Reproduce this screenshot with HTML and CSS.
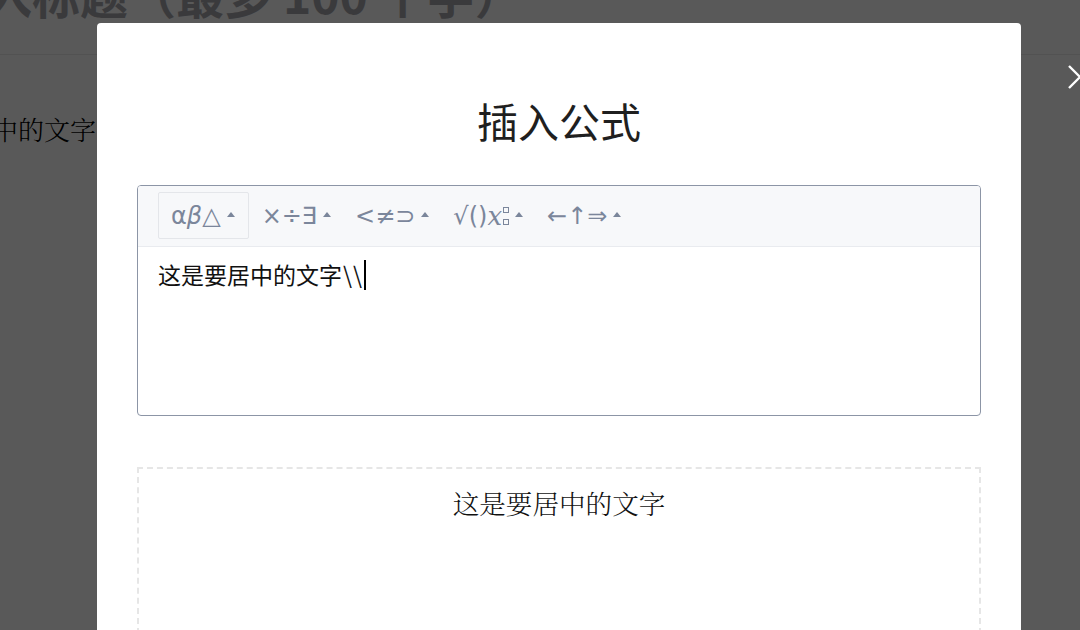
FILE: index.html
```html
<!DOCTYPE html>
<html lang="zh-CN">
<head>
<meta charset="utf-8">
<title>插入公式</title>
<link rel="stylesheet" href="styles.css">
</head>
<body>
<div class="page">
  <h1 class="page-title">请输入标题（最多 100 个字）</h1>
  <p class="page-text">这是要居中的文字</p>
</div>
<div class="mask"></div>
<button class="close" aria-label="关闭">
  <svg width="28" height="28" viewBox="0 0 28 28"><path d="M3 3 L25 25 M25 3 L3 25" stroke="#fff" stroke-width="2.4" fill="none"/></svg>
</button>
<div class="modal">
  <h2 class="modal-title">插入公式</h2>
  <div class="editor">
    <div class="toolbar">
      <span class="tool active"><span class="sym">α<i class="it">β</i>△</span><span class="caret"></span></span>
      <span class="tool"><span class="sym">×÷∃</span><span class="caret"></span></span>
      <span class="tool"><span class="sym">&lt;≠⊃</span><span class="caret"></span></span>
      <span class="tool"><span class="sym">√()<i class="mx">x</i><span class="boxes"><span class="bx"></span><span class="bx"></span></span></span><span class="caret"></span></span>
      <span class="tool"><span class="sym">←↑⇒</span><span class="caret"></span></span>
    </div>
    <div class="input">这是要居中的文字<span class="bs">\\</span><span class="cursor"></span></div>
  </div>
  <div class="preview">这是要居中的文字</div>
</div>
</body>
</html>
```

FILE: styles.css
```css
html, body {
  margin: 0;
  padding: 0;
  width: 1080px;
  height: 630px;
  overflow: hidden;
  background: #ffffff;
  font-family: "Noto Sans CJK SC", "Noto Sans", sans-serif;
}

.page {
  margin-left: -112px;
  margin-top: -37px;
}

.page-title {
  margin: 0;
  font-size: 48px;
  line-height: 60px;
  font-weight: 700;
  color: #a7a7ad;
  padding-bottom: 31px;
  border-bottom: 1px solid #ececec;
  white-space: nowrap;
}

.page-text {
  margin: 0;
  padding-top: 54px;
  font-family: "Noto Serif CJK SC", "Noto Sans CJK SC", serif;
  font-size: 26px;
  font-weight: 300;
  line-height: 40px;
  color: #000;
}

.mask {
  position: fixed;
  inset: 0;
  background: rgba(0, 0, 0, 0.65);
}

.close {
  position: fixed;
  left: 1066px;
  top: 63px;
  width: 28px;
  height: 28px;
  padding: 0;
  border: 0;
  background: transparent;
}
.close svg { display: block; }

.modal {
  position: fixed;
  left: 97px;
  top: 23px;
  width: 924px;
  height: 700px;
  box-sizing: border-box;
  padding: 69px 40px 0;
  background: #fff;
  border-radius: 4px;
}

.modal-title {
  margin: 0 0 37px;
  font-size: 41px;
  line-height: 56px;
  font-weight: 400;
  color: #1f1f1f;
  text-align: center;
}

.editor {
  border: 1px solid #8c95a6;
  border-radius: 4px;
  height: 231px;
  box-sizing: border-box;
  overflow: hidden;
}

.toolbar {
  display: flex;
  align-items: center;
  padding: 6px 20px 7px;
  height: 61px;
  box-sizing: border-box;
  background: #f7f8fa;
  border-bottom: 1px solid #e9ebef;
}

.tool {
  display: flex;
  align-items: center;
  height: 47px;
  box-sizing: border-box;
  padding: 0 10px 0 12px;
  border: 1px solid transparent;
  color: #7b869b;
  font-family: "DejaVu Sans", "Noto Sans", sans-serif;
  font-size: 24px;
}
.tool.active {
  border-color: #e4e6ea;
  border-radius: 2px;
  padding-right: 13px;
}

.sym {
  display: flex;
  align-items: center;
  white-space: nowrap;
}
.sym .it {
  font-style: italic;
  font-family: "DejaVu Sans", sans-serif;
}
.sym .mx {
  font-style: italic;
  font-family: "DejaVu Serif", "Liberation Serif", serif;
  font-size: 26px;
}
.boxes {
  display: flex;
  flex-direction: column;
  gap: 6px;
  margin-left: 1px;
}
.bx {
  width: 6px;
  height: 6px;
  border: 1.5px solid #7b869b;
  box-sizing: border-box;
}

.caret {
  width: 0;
  height: 0;
  margin-left: 6px;
  margin-top: -3px;
  border-left: 4px solid transparent;
  border-right: 4px solid transparent;
  border-bottom: 5px solid #7b869b;
}

.input {
  padding: 11px 20px;
  font-size: 23px;
  line-height: 33px;
  color: #111;
  display: flex;
  align-items: center;
}
.bs {
  letter-spacing: 1px;
  margin-left: 1px;
}
.cursor {
  display: inline-block;
  width: 2px;
  height: 30px;
  background: #000;
  margin-left: 1px;
}

.preview {
  margin-top: 51px;
  border: 2px dashed #e6e6e6;
  height: 300px;
  padding-top: 14px;
  text-align: center;
  font-family: "Noto Serif CJK SC", "Noto Sans CJK SC", serif;
  font-weight: 300;
  font-size: 26.6px;
  line-height: 40px;
  color: #111;
}
```
